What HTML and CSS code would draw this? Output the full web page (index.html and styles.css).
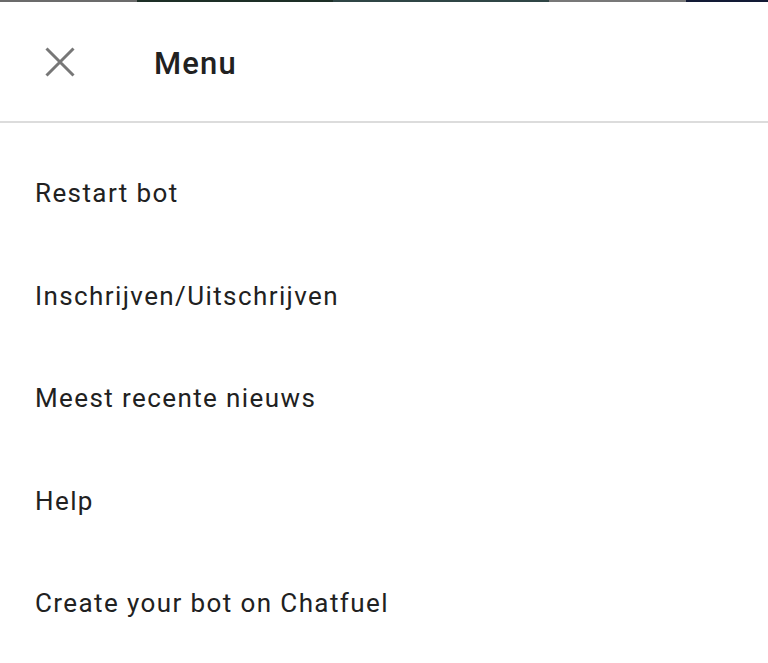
FILE: index.html
```html
<!DOCTYPE html>
<html lang="nl">
<head>
<meta charset="utf-8">
<title>Menu</title>
<link rel="stylesheet" href="styles.css">
</head>
<body>
<div class="strip">
  <span class="seg seg-gray"></span>
  <span class="seg seg-green"></span>
  <span class="seg seg-teal"></span>
  <span class="seg seg-gray2"></span>
  <span class="seg seg-navy"></span>
</div>
<header class="header">
  <button class="close" aria-label="Close">
    <svg width="30" height="30" viewBox="0 0 30 30"><path d="M1.5 1.5 L28.5 28.5 M28.5 1.5 L1.5 28.5" stroke="#777" stroke-width="3" fill="none"/></svg>
  </button>
  <h1 class="title">Menu</h1>
</header>
<ul class="menu">
  <li class="item">Restart bot</li>
  <li class="item">Inschrijven/Uitschrijven</li>
  <li class="item">Meest recente nieuws</li>
  <li class="item">Help</li>
  <li class="item">Create your bot on Chatfuel</li>
</ul>
</body>
</html>
```
FILE: styles.css
```css
html, body {
  margin: 0;
  padding: 0;
  background: #fff;
  font-family: Roboto, "Noto Sans", sans-serif;
  color: #212121;
  overflow: hidden;
}
.strip {
  display: flex;
  height: 2px;
}
.seg { display: block; height: 100%; }
.seg-gray { width: 137px; background: #6b6b6b; }
.seg-green { width: 196px; background: #1d2f26; }
.seg-teal { width: 216px; background: #2f4545; }
.seg-gray2 { width: 137px; background: #787878; }
.seg-navy { flex: 1; background: #121a35; }
.header {
  display: flex;
  align-items: center;
  height: 119px;
  border-bottom: 2px solid #dcdcdc;
  padding-left: 45px;
}
.close {
  border: 0;
  background: none;
  padding: 0;
  width: 30px;
  height: 30px;
  display: flex;
  margin-right: 79px;
}
.title {
  margin: 0;
  font-size: 31px;
  font-weight: 500;
  letter-spacing: 1.2px;
  color: #212121;
  position: relative;
  top: 2px;
}
.menu {
  list-style: none;
  margin: 0;
  padding: 19px 0 0 35px;
}
.item {
  height: 102.5px;
  line-height: 102.5px;
  font-size: 26px;
  letter-spacing: 1.4px;
}
```
